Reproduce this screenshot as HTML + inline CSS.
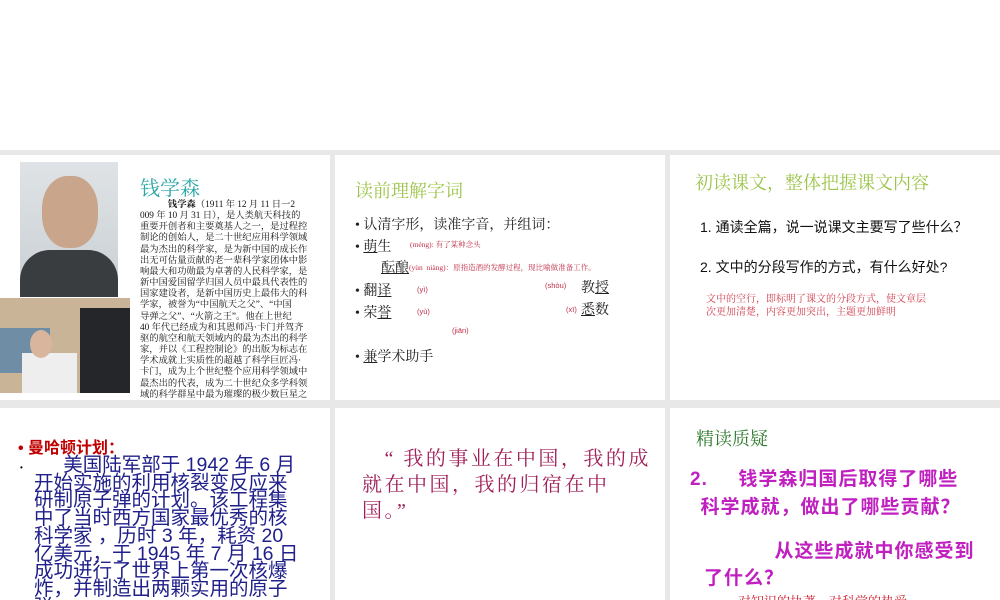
<!DOCTYPE html><html><head><meta charset="utf-8"><style>
body{margin:0;width:1000px;height:600px;overflow:hidden;background:#fff;font-family:"Liberation Sans","Noto Sans CJK SC",sans-serif;position:relative}
.bg{position:absolute;left:0;top:150px;width:1000px;height:450px;background:#e8e8e8}
.p{position:absolute;background:#fff;overflow:hidden}
.a{position:absolute;white-space:nowrap}
.serif{font-family:"Liberation Serif","Noto Serif CJK SC",serif}
</style></head><body>
<div class="bg"></div>
<div class="p" style="left:0;top:155px;width:330px;height:245px">
 <div class="a" style="left:20px;top:7px;width:98px;height:135px;background:linear-gradient(#dfe3e6,#c9cfd3)">
  <div style="position:absolute;left:22px;top:14px;width:56px;height:72px;border-radius:45%;background:#c9a58c"></div>
  <div style="position:absolute;left:0;top:88px;width:98px;height:47px;background:#3a3d40;border-radius:30px 30px 0 0"></div>
 </div>
 <div class="a" style="left:0;top:143px;width:130px;height:95px;background:#c9b497">
  <div style="position:absolute;left:0;top:30px;width:50px;height:45px;background:#6f8ea6"></div>
  <div style="position:absolute;left:80px;top:10px;width:50px;height:85px;background:#25262a"></div>
  <div style="position:absolute;left:22px;top:55px;width:55px;height:40px;background:#eee"></div>
  <div style="position:absolute;left:30px;top:32px;width:22px;height:28px;border-radius:50%;background:#d8b59c"></div>
 </div>
 <div class="a serif" style="left:140px;top:17px;font-size:20px;color:#2aa6a6">钱学森</div>
 <div class="a serif" style="left:140px;top:45px;font-size:9.3px;line-height:11.15px;color:#111">&emsp;&emsp;&emsp;<b>钱学森</b>（1911 年 12 月 11 日一2<br>009 年 10 月 31 日），是人类航天科技的<br>重要开创者和主要奠基人之一，是过程控<br>制论的创始人，是二十世纪应用科学领域<br>最为杰出的科学家，是为新中国的成长作<br>出无可估量贡献的老一辈科学家团体中影<br>响最大和功勋最为卓著的人民科学家，是<br>新中国爱国留学归国人员中最具代表性的<br>国家建设者，是新中国历史上最伟大的科<br>学家，被誉为“中国航天之父”、“中国<br>导弹之父”、“火箭之王”。他在上世纪<br>40 年代已经成为和其恩师冯·卡门并驾齐<br>驱的航空和航天领域内的最为杰出的科学<br>家，并以《工程控制论》的出版为标志在<br>学术成就上实质性的超越了科学巨匠冯·<br>卡门，成为上个世纪整个应用科学领域中<br>最杰出的代表，成为二十世纪众多学科领<br>域的科学群星中最为璀璨的极少数巨星之</div>
</div>
<div class="p" style="left:335px;top:155px;width:330px;height:245px">
 <div class="a serif" style="left:20px;top:22px;font-size:18px;color:#9cc44a">读前理解字词</div>
 <div class="a serif" style="left:20px;top:60px;font-size:14px;color:#222;line-height:22px">• 认清字形，读准字音，并组词：<br>• <u>萌</u>生<br><br>• 翻<u>译</u><br>• 荣<u>誉</u><br><br>• <u>兼</u>学术助手</div>
 <div class="a serif" style="left:75px;top:84px;font-size:7.5px;color:#c0304a">(méng): 有了某种念头</div>
 <div class="a serif" style="left:46px;top:102px;font-size:14px;color:#222"><u>酝酿</u></div>
 <div class="a serif" style="left:74px;top:107px;font-size:7.5px;color:#c0304a">(yùn&nbsp; niàng)：原指造酒的发酵过程，现比喻做准备工作。</div>
 <div class="a" style="left:82px;top:130px;font-size:7.5px;color:#c0304a">(yì)</div>
 <div class="a" style="left:82px;top:152px;font-size:7.5px;color:#c0304a">(yù)</div>
 <div class="a" style="left:210px;top:126px;font-size:7.5px;color:#c0304a">(shòu)</div>
 <div class="a serif" style="left:246px;top:122px;font-size:14px;color:#222">教<u>授</u></div>
 <div class="a" style="left:231px;top:150px;font-size:7.5px;color:#c0304a">(xī)</div>
 <div class="a serif" style="left:246px;top:144px;font-size:14px;color:#222"><u>悉</u>数</div>
 <div class="a" style="left:117px;top:171px;font-size:7.5px;color:#c0304a">(jiān)</div>
</div>
<div class="p" style="left:670px;top:155px;width:330px;height:245px">
 <div class="a serif" style="left:25px;top:14px;font-size:18px;color:#9cc44a">初读课文，整体把握课文内容</div>
 <div class="a" style="left:30px;top:62px;font-size:14px;color:#111">1. 通读全篇，说一说课文主要写了些什么？</div>
 <div class="a" style="left:30px;top:102px;font-size:14px;color:#111">2. 文中的分段写作的方式，有什么好处?</div>
 <div class="a serif" style="left:36px;top:139px;font-size:10px;line-height:12.5px;color:#d04050">文中的空行，即标明了课文的分段方式，使文章层<br>次更加清楚，内容更加突出，主题更加鲜明</div>
</div>
<div class="p" style="left:0;top:408px;width:330px;height:192px">
 <div class="a" style="left:18px;top:26px;font-size:16px;font-weight:bold;color:#c00000">• 曼哈顿计划：</div>
 <div class="a" style="left:20px;top:55px;font-size:8px;color:#000">•</div>
 <div class="a" style="left:34px;top:49px;font-size:19.5px;line-height:17.7px;color:#20208a;letter-spacing:0px">&emsp;&ensp;美国陆军部于 1942 年 6 月<br>开始实施的利用核裂变反应来<br>研制原子弹的计划。该工程集<br>中了当时西方国家最优秀的核<br>科学家 ，历时 3 年，耗资 20<br>亿美元，于 1945 年 7 月 16 日<br>成功进行了世界上第一次核爆<br>炸，并制造出两颗实用的原子<br>弹。</div>
</div>
<div class="p" style="left:335px;top:408px;width:330px;height:192px">
 <div class="a serif" style="left:27px;top:38px;font-size:20px;letter-spacing:2.5px;line-height:26px;color:#a0205a">&emsp;“ 我的事业在中国，我的成<br>就在中国，我的归宿在中<br>国。”</div>
</div>
<div class="p" style="left:670px;top:408px;width:330px;height:192px">
 <div class="a serif" style="left:26px;top:17px;font-size:18px;color:#2e7a2e">精读质疑</div>
 <div class="a" style="left:20px;top:58px;font-size:19px;letter-spacing:1px;font-weight:bold;line-height:28px;color:#c020c0">2.&emsp;&ensp;钱学森归国后取得了哪些<br>&ensp;科学成就，做出了哪些贡献？</div>
 <div class="a" style="left:34px;top:130px;font-size:19px;letter-spacing:1px;font-weight:bold;line-height:27px;color:#c020c0">&emsp;&emsp;&emsp;&ensp;从这些成就中你感受到<br>了什么？</div>
 <div class="a serif" style="left:68px;top:183px;font-size:13px;color:#d02030">对知识的执著，对科学的热爱</div>
</div>
</body></html>
